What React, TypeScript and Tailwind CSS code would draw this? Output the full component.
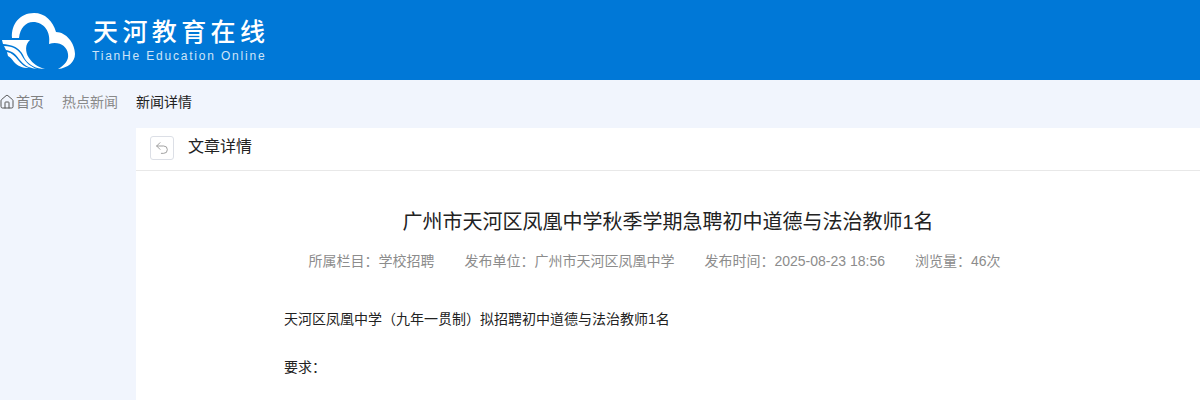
import { Home, Undo2 } from "lucide-react";

const FONT = "font-['Liberation_Sans','Noto_Sans_CJK_SC',sans-serif]";

/**
 * Cloud mark with the three swept wings on its left side.
 */
function Logo() {
	return (
		<svg width="76" height="80" viewBox="0 0 76 80" className="mr-[16px] shrink-0">
			<path
				d="M12 38 C11 24 20 13 34 13 C45 13 53 21 56 32 C66 32 75 43 75 54 C75 62 68 68 58 69 C65 65 69 60 68 54 C67 46 59 41 49 44 C51 32 44 22 33 22 C26 22 20 28 19 38 Z"
				fill="#fff"
			/>
			<path d="M2 40 L30 40 C25 44 25 52 29 58 C33 64 38 67 45 69 C36 69 29 65 25 59 C22 52 18 45 3 44 Z" fill="#fff" />
			<path d="M4 46 C13 46 19 50 22 56 C26 63 31 67 37 69 C28 68 24 65 19 59 C16 54 12 51 6 50 Z" fill="#fff" />
			<path d="M7 52 C12 53 15 56 18 60 C21 64 25 67 29 68 C22 68 18 66 14 62 C12 59 10 57 8 56 Z" fill="#fff" />
		</svg>
	);
}

export default function App() {
	return (
		<div className={`h-[400px] overflow-hidden bg-[#f1f5fd] ${FONT}`}>
			<header className="flex h-20 items-center bg-[#0078d7]">
				<Logo />
				<div className="flex flex-col">
					<div className="pl-[1px] text-[25px] leading-[30px] font-medium tracking-[4.4px] text-white">天河教育在线</div>
					<div className="mt-[1px] text-[12px] leading-[16px] tracking-[1.8px] text-[#cfe4f7]">TianHe Education Online</div>
				</div>
			</header>

			<nav className="flex h-12 items-center pb-1 text-[14px]">
				<span className="flex items-center text-[#808080]">
					<Home size={16} strokeWidth={1.5} className="-ml-px mr-px text-[#555]" />
					首页
				</span>
				<span className="ml-[18px] text-[#8a8a8a]">热点新闻</span>
				<span className="ml-[18px] text-[#222]">新闻详情</span>
			</nav>

			<main className="ml-[136px] h-[272px] bg-white">
				<div className="flex h-[43px] items-center border-b border-[#e8e8e8] pb-[2px] pl-[14px]">
					<button className="flex h-6 w-6 items-center justify-center rounded-[3px] border border-[#dcdfe6] text-[#999]">
						<Undo2 size={16} strokeWidth={1.4} />
					</button>
					<span className="mb-[2px] ml-[14px] text-[16px] text-[#222]">文章详情</span>
				</div>

				<h1 className="mt-[36px] text-center text-[20px] leading-[30px] text-[#222]">
					广州市天河区凤凰中学秋季学期急聘初中道德与法治教师1名
				</h1>

				<div className="mt-[14px] flex justify-center gap-[30px] pr-[27px] text-[14px] leading-[20px] text-[#8c8c8c]">
					<span>所属栏目：学校招聘</span>
					<span>发布单位：广州市天河区凤凰中学</span>
					<span>发布时间：2025-08-23 18:56</span>
					<span>浏览量：46次</span>
				</div>

				<div className="mt-[38px] px-[148px] text-[14px] leading-[20px] text-[#222]">
					<p>天河区凤凰中学（九年一贯制）拟招聘初中道德与法治教师1名</p>
					<p className="mt-[28px]">要求：</p>
				</div>
			</main>
		</div>
	);
}
